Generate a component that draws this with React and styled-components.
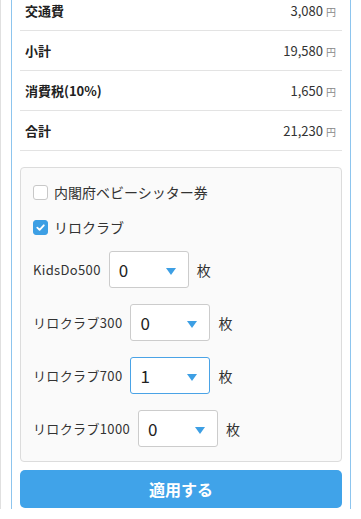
import styled, { createGlobalStyle } from "styled-components";

const Totals = [
  { id: 1, label: "交通費", amount: "3,080" },
  { id: 2, label: "小計", amount: "19,580" },
  { id: 3, label: "消費税(10%)", amount: "1,650" },
  { id: 4, label: "合計", amount: "21,230" },
];

const Tickets = [
  { id: 1, label: "KidsDo500", value: "0", focused: false },
  { id: 2, label: "リロクラブ300", value: "0", focused: false },
  { id: 3, label: "リロクラブ700", value: "1", focused: true },
  { id: 4, label: "リロクラブ1000", value: "0", focused: false },
];

export default function App() {
  return (
    <>
      <GlobalStyle />
      <Page>
        <Card>
          {Totals.map((Item) => (
            <TotalRow key={Item.id}>
              <TotalLabel>{Item.label}</TotalLabel>
              <Price>
                {Item.amount}
                <Yen>円</Yen>
              </Price>
            </TotalRow>
          ))}
          <DiscountBox>
            <CheckRow>
              <Checkbox />
              内閣府ベビーシッター券
            </CheckRow>
            <CheckRow>
              <Checkbox checked>
                <svg width="11" height="11" viewBox="0 0 12 12">
                  <path
                    d="M2.5 6.2 L5 8.6 L9.6 3.6"
                    fill="none"
                    stroke="#fff"
                    strokeWidth="2"
                    strokeLinecap="round"
                    strokeLinejoin="round"
                  />
                </svg>
              </Checkbox>
              リロクラブ
            </CheckRow>
            <QtyList>
              {Tickets.map((Ticket) => (
                <QtyRow key={Ticket.id}>
                  <QtyLabel>{Ticket.label}</QtyLabel>
                  <Select focused={Ticket.focused}>
                    {Ticket.value}
                    <Arrow />
                  </Select>
                  <Unit>枚</Unit>
                </QtyRow>
              ))}
            </QtyList>
          </DiscountBox>
          <ApplyButton>適用する</ApplyButton>
        </Card>
      </Page>
    </>
  );
}

const GlobalStyle = createGlobalStyle`
  body {
    margin: 0;
    background: #fff;
    font-family: "Noto Sans CJK JP", "Noto Sans", sans-serif;
    color: #333;
    overflow: hidden;
  }
`;

const Page = styled.div`
  border-left: 1px solid #e0e0e0;
  padding: 0 10px;
  height: 519px;
  box-sizing: border-box;
`;

const Card = styled.div`
  margin-top: -10px;
  border: 1px solid #8dc5ee;
  border-radius: 0 0 6px 6px;
  padding: 0 8px 7px;
  background: #fff;
`;

const TotalRow = styled.div`
  display: flex;
  justify-content: space-between;
  align-items: center;
  height: 39px;
  padding: 0 6px 0 5px;
  border-bottom: 1px solid #e3e3e3;
`;

const TotalLabel = styled.span`
  font-size: 13px;
  font-weight: bold;
  color: #222;
`;

const Price = styled.span`
  font-size: 13px;
  color: #333;
`;

const Yen = styled.span`
  font-size: 10px;
  color: #888;
  margin-left: 3px;
`;

const DiscountBox = styled.div`
  margin-top: 16px;
  background: #fafafa;
  border: 1px solid #dcdcdc;
  border-radius: 4px;
  padding: 13px 12px 14px;
  display: flex;
  flex-direction: column;
  gap: 13px;
`;

const CheckRow = styled.label`
  display: flex;
  align-items: center;
  gap: 6px;
  height: 22px;
  font-size: 14px;
  color: #333;
`;

const Checkbox = styled.span`
  width: 15px;
  height: 15px;
  box-sizing: border-box;
  border-radius: 3px;
  border: 1px solid ${(p) => (p.checked ? "#3d9fe4" : "#c8c8c8")};
  background: ${(p) => (p.checked ? "#3d9fe4" : "#fff")};
  display: flex;
  align-items: center;
  justify-content: center;
`;

const QtyList = styled.div`
  display: flex;
  flex-direction: column;
  gap: 16px;
`;

const QtyRow = styled.div`
  display: flex;
  align-items: center;
  gap: 8px;
`;

const QtyLabel = styled.span`
  font-size: 13px;
  letter-spacing: 0.35px;
  color: #333;
`;

const Select = styled.div`
  position: relative;
  width: 80px;
  height: 37px;
  box-sizing: border-box;
  border: 1px solid ${(p) => (p.focused ? "#4aa3e6" : "#cccccc")};
  border-radius: 3px;
  background: #fff;
  padding-left: 9px;
  display: flex;
  align-items: center;
  font-size: 17px;
  color: #222;
`;

const Arrow = styled.span`
  position: absolute;
  right: 12px;
  top: 16px;
  width: 0;
  height: 0;
  border-left: 5px solid transparent;
  border-right: 5px solid transparent;
  border-top: 7px solid #3d9fe4;
`;

const Unit = styled.span`
  font-size: 14px;
  color: #333;
`;

const ApplyButton = styled.button`
  display: block;
  width: 100%;
  margin-top: 8px;
  height: 38px;
  border: none;
  border-radius: 5px;
  background: #40a3e9;
  color: #fff;
  font-family: inherit;
  font-size: 16px;
  font-weight: bold;
`;
